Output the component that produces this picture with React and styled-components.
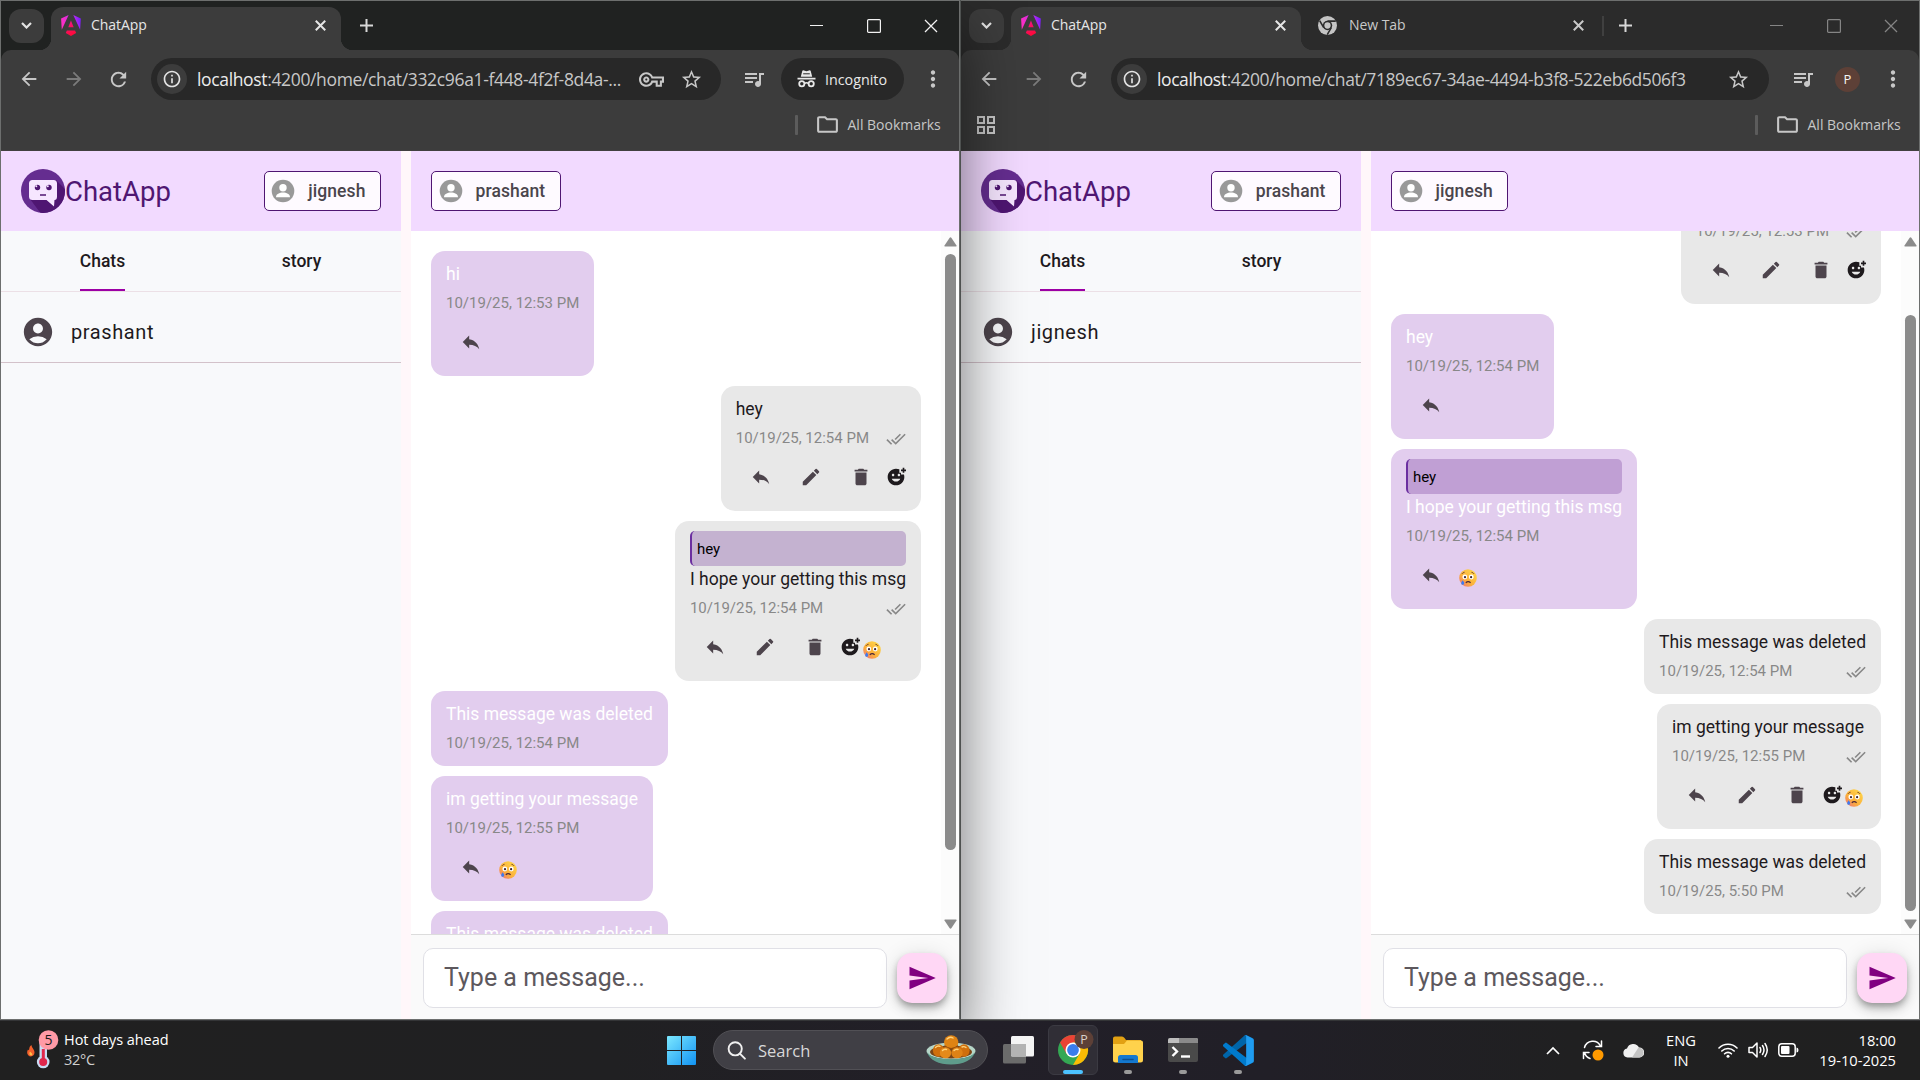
import React from "react";
import styled, { createGlobalStyle, css } from "styled-components";
import {
  MdReply, MdEdit, MdDelete, MdAddReaction, MdDoneAll, MdSend, MdAccountCircle,
  MdArrowBack, MdArrowForward, MdRefresh, MdInfoOutline, MdStarBorder, MdQueueMusic,
  MdMoreVert, MdOutlineFolder, MdOutlineVpnKey,
} from "react-icons/md";

const UI = `"Open Sans", "Noto Sans", sans-serif`;
const RB = `Roboto, "Noto Sans", sans-serif`;

const Global = createGlobalStyle`
  * { box-sizing: border-box; }
  body { margin: 0; background: #1f2022; overflow: hidden; }
  svg { display: block; flex: none; }
`;

const Desktop = styled.div`
  width: 1920px;
  height: 1080px;
  display: flex;
  flex-direction: column;
  overflow: hidden;
`;

const Windows = styled.div`
  display: flex;
  height: 1020px;
  overflow: hidden;
`;

const Frame = styled.section`
  width: 960px;
  height: 1020px;
  border: 1px solid #6d6f6e;
  display: flex;
  flex-direction: column;
  position: relative;
  z-index: ${(p) => (p.$active ? 1 : 0)};
  box-shadow: ${(p) => (p.$active ? "1px 0 0 #4e5150, 0 30px 60px 0 rgba(0,0,0,.56)" : "none")};
`;

/* ---------- browser chrome ---------- */

const TitleBar = styled.header`
  height: 49px;
  flex: none;
  display: flex;
  align-items: center;
  padding-left: 8px;
  background: ${(p) => (p.$active ? "#202221" : "#2b2b2b")};
  color: #e3e3e3;
  font-family: ${UI};
`;

const TabSearch = styled.button`
  width: 35px;
  height: 34px;
  margin-right: 7px;
  border: 0;
  border-radius: 12px;
  background: #3c3c3c;
  color: #e3e3e3;
  display: grid;
  place-items: center;
  padding: 0;
`;

const Tab = styled.div`
  position: relative;
  width: ${(p) => p.$w || 290}px;
  height: 43px;
  margin-top: 6px;
  padding: 0 12px 7px ${(p) => (p.$on ? 10 : 17)}px;
  display: flex;
  align-items: center;
  font-size: 14px;
  letter-spacing: -0.05px;
  color: ${(p) => (p.$on ? "#e6e6e6" : "#c9c9c9")};
  ${(p) =>
    p.$on &&
    css`
      background: #3c3c3c;
      border-radius: 12px 12px 0 0;
      &::before,
      &::after {
        content: "";
        position: absolute;
        bottom: 0;
        width: 12px;
        height: 12px;
      }
      &::before {
        left: -12px;
        background: radial-gradient(circle at 0 0, transparent 12px, #3c3c3c 12.5px);
      }
      &::after {
        right: -12px;
        background: radial-gradient(circle at 12px 0, transparent 12px, #3c3c3c 12.5px);
      }
    `}
`;

const TabTitle = styled.span`
  flex: 1;
  margin-left: ${(p) => p.$gap || 10}px;
  line-height: 20px;
`;

const TabClose = styled.span`
  margin-right: ${(p) => p.$gap}px;
`;

const TabDivider = styled.i`
  width: 2px;
  height: 20px;
  background: #404040;
`;

const PlusSlot = styled.div`
  width: 42px;
  margin-left: ${(p) => p.$gap}px;
  display: grid;
  place-items: center;
  color: #d8d8d8;
`;

const Controls = styled.div`
  margin-left: auto;
  margin-right: -1px;
  display: flex;
  color: ${(p) => (p.$active ? "#f2f2f2" : "#858585")};
`;

const Control = styled.div`
  width: 57.5px;
  display: grid;
  place-items: center;
`;

const ToolBarBack = styled.div`
  flex: none;
  background: ${(p) => (p.$active ? "#202221" : "#2b2b2b")};
`;

const ToolBar = styled.div`
  height: 58px;
  padding-left: 5px;
  display: flex;
  align-items: center;
  background: #3c3c3c;
  border-radius: 10px 10px 0 0;
  color: #c7c7c7;
  font-family: ${UI};
`;

const Slot = styled.div`
  width: ${(p) => p.$w || 45}px;
  height: 45px;
  flex: none;
  display: grid;
  place-items: center;
  color: ${(p) => (p.$dim ? "#7b7b7b" : "#c7c7c7")};
`;

const MenuSlot = styled(Slot)`
  width: 55px;
  padding-left: 2px;
`;

const Omnibox = styled.div`
  flex: 1;
  height: 42px;
  margin: 0 ${(p) => p.$gap}px 0 10px;
  padding: 0 10px 0 6px;
  border-radius: 21px;
  background: #282828;
  display: flex;
  align-items: center;
`;

const SiteInfo = styled.span`
  width: 30px;
  height: 30px;
  border-radius: 50%;
  background: #3c3c3c;
  color: #e3e3e3;
  display: grid;
  place-items: center;
`;

const Url = styled.span`
  flex: 1;
  margin-left: 10px;
  font-size: 17.5px;
  line-height: 24px;
  letter-spacing: ${(p) => p.$ls}px;
  white-space: nowrap;
  color: #c7c7c7;
  b {
    font-weight: 400;
    color: #ececec;
  }
`;

const IncognitoChip = styled.div`
  width: 123px;
  height: 42px;
  margin-left: 4.5px;
  padding-left: 16px;
  border-radius: 21px;
  background: #282828;
  color: #e8e8e8;
  display: flex;
  align-items: center;
  gap: 9px;
  font-size: 14.3px;
`;

const ProfileDot = styled.span`
  width: 25px;
  height: 25px;
  margin: 0 4px 0 10px;
  border-radius: 50%;
  background: #5d4037;
  color: #f5f5f5;
  font: 13px/25px ${UI};
  text-align: center;
`;

const BookmarkBar = styled.div`
  height: 43px;
  flex: none;
  padding: 0 16.500px 9px 16px;
  display: flex;
  align-items: center;
  background: #3c3c3c;
  color: #c7c7c7;
  font-family: ${UI};
  font-size: 14px;
  border-bottom: 1px solid #424040;
`;

const BookmarkDivider = styled.i`
  width: 3px;
  height: 20px;
  margin-left: auto;
  border-radius: 1px;
  background: #5c5c5c;
`;

const AllBookmarks = styled.span`
  width: 145px;
  padding-left: 17px;
  display: flex;
  align-items: center;
  gap: 8px;
  white-space: nowrap;
`;

/* ---------- chat page ---------- */

const Page = styled.main`
  flex: 1;
  min-height: 0;
  display: grid;
  grid-template-columns: 400px 1fr;
  column-gap: 10px;
  background: #fff7fa;
  font-family: ${RB};
`;

const Side = styled.aside`
  background: #f8f9fb;
  display: flex;
  flex-direction: column;
`;

const Head = styled.div`
  height: 80px;
  flex: none;
  padding: 0 20px;
  display: flex;
  align-items: center;
  justify-content: space-between;
  background: #f2daff;
`;

const Brand = styled.div`
  display: flex;
  align-items: center;
  font-size: 27.5px;
  color: #4f1672;
`;

const UserChip = styled.button`
  height: 40px;
  padding: 0 14.5px 0 6.5px;
  display: flex;
  align-items: center;
  gap: 13px;
  border: 1px solid #4f1672;
  border-radius: 5px;
  background: #fefaff;
  color: #4a454c;
  font: 500 17.5px ${RB};
  letter-spacing: 0.1px;
`;

const SideTabs = styled.nav`
  height: 61px;
  flex: none;
  padding-left: 2px;
  display: grid;
  grid-template-columns: 1fr 1fr;
  justify-items: center;
  border-bottom: 1px solid #ece0e6;
`;

const SideTab = styled.span`
  height: 60px;
  font-weight: 500;
  font-size: 17.5px;
  line-height: 60px;
  color: #1e1a1d;
  box-shadow: inset 0 -2px 0 ${(p) => (p.$on ? "#9c00a5" : "transparent")};
`;

const Contact = styled.div`
  height: 71px;
  padding: 9px 0 0 20px;
  display: flex;
  align-items: center;
  gap: 16px;
  border-bottom: 1px solid #d3c2ca;
  color: #1e1a1d;
  font-size: 20px;
  letter-spacing: 0.6px;
`;

const Conversation = styled.section`
  display: flex;
  flex-direction: column;
  min-width: 0;
  min-height: 0;
  background: #fff;
`;

const Scroller = styled.div`
  flex: 1;
  min-height: 0;
  display: flex;
`;

const Messages = styled.div`
  flex: 1;
  padding: 20px;
  display: flex;
  flex-direction: column;
  justify-content: ${(p) => (p.$bottom ? "flex-end" : "flex-start")};
  gap: 10px;
  overflow: hidden;
`;

const Bubble = styled.article`
  flex: none;
  align-self: ${(p) => (p.$own ? "flex-end" : "flex-start")};
  padding: 10px 15px 8px;
  border-radius: 14px;
  background: ${(p) => (p.$own ? "#e8e8e8" : "#e2cdee")};
  color: ${(p) => (p.$own ? "#1e1a1d" : "#fff")};
`;

const Quote = styled.div`
  height: 35px;
  padding-left: 5px;
  border-left: 2px solid #6b2fa0;
  border-radius: 5px;
  background: rgba(112, 52, 152, 0.3);
  color: #000;
  font-size: 15px;
  line-height: 36px;
`;

const Body = styled.p`
  margin: 0 0 2px;
  font-size: 17.5px;
  line-height: 26px;
  height: 25px;
  white-space: nowrap;
`;

const Meta = styled.div`
  height: 30px;
  display: flex;
  align-items: center;
  justify-content: space-between;
  gap: 17px;
  font-size: 15px;
  color: #888;
`;

const Receipt = styled(MdDoneAll)`
  margin-top: 1px;
`;

const Actions = styled.div`
  height: 50px;
  padding-bottom: 2px;
  display: flex;
  align-items: center;
  color: #4d444c;
`;

const Action = styled.span`
  width: 50px;
  display: grid;
  place-items: center;
`;

const AddReaction = styled.span`
  width: 20px;
  color: #1e1a1d;
`;

const Reaction = styled.span`
  width: 24px;
  padding-top: 6px;
  display: grid;
  place-items: center;
`;

const ScrollBar = styled.div`
  width: 18px;
  flex: none;
  padding: 6px 0 5px 1px;
  display: flex;
  flex-direction: column;
  align-items: center;
  background: #fcfcfc;
`;

const Thumb = styled.i`
  width: 11px;
  height: 596px;
  margin-top: ${(p) => p.$top}px;
  margin-bottom: auto;
  border-radius: 6px;
  background: #8b8b8b;
`;

const Composer = styled.footer`
  height: 85px;
  flex: none;
  padding: 0 12px 0 12px;
  display: flex;
  align-items: center;
  gap: 10px;
  border-top: 1px solid #dcdcdc;
  background: #fafafa;
`;

const Field = styled.div`
  flex: 1;
  height: 60px;
  margin-top: 2px;
  padding-left: 20px;
  border: 1px solid #e0e0e6;
  border-radius: 10px;
  background: #fff;
  color: #5d585d;
  font-size: 25px;
  line-height: 58px;
`;

const SendButton = styled.button`
  width: 50px;
  height: 50px;
  margin-top: 2px;
  padding: 0;
  border: 0;
  border-radius: 15px;
  background: #ffd7f5;
  color: #800080;
  display: grid;
  place-items: center;
  box-shadow: 0 4px 6px -1px rgba(0, 0, 0, 0.28), 0 7px 12px rgba(0, 0, 0, 0.14), 0 1px 20px rgba(0, 0, 0, 0.1);
`;

/* ---------- taskbar ---------- */

const TaskBar = styled.footer`
  height: 60px;
  padding-bottom: 1px;
  display: flex;
  align-items: center;
  background: linear-gradient(90deg, #202020 0, #202022 32%, #221f28 50%, #211f27 66%, #202021 82%, #202020 100%);
  border-top: 1px solid #343537;
  color: #fff;
  font-family: ${UI};
  font-size: 14px;
`;

const Weather = styled.div`
  width: 667px;
  padding-left: 25px;
  display: flex;
  align-items: center;
  line-height: 20px;
  font-size: 14.5px;
  letter-spacing: -0.05px;
  span {
    display: block;
  }
  span + span {
    color: #d0d0d0;
    letter-spacing: -0.3px;
  }
`;

const WeatherText = styled.div`
  margin: -1px 0 0 3px;
`;

const SearchBox = styled.div`
  width: 275px;
  height: 40px;
  margin-left: 17px;
  padding: 0 11px 0 13px;
  border-radius: 20px;
  border: 1px solid #515055;
  background: #403f45;
  display: flex;
  align-items: center;
  gap: 12px;
  font-size: 16.5px;
  color: #d8d8d8;
  span {
    flex: 1;
  }
`;

const Apps = styled.div`
  display: flex;
  margin-left: 5px;
`;

const AppButton = styled.div`
  position: relative;
  width: 50px;
  height: 50px;
  margin-right: 5px;
  display: grid;
  place-items: center;
  border-radius: 6px;
  background: ${(p) => (p.$active ? "#302e36" : "transparent")};
  border: 1px solid ${(p) => (p.$active ? "#3b3a42" : "transparent")};
`;

const Running = styled.i`
  position: absolute;
  bottom: 0;
  left: 50%;
  transform: translateX(-50%);
  width: ${(p) => (p.$active ? 20 : 8)}px;
  height: 4px;
  border-radius: 2px;
  background: ${(p) => (p.$active ? "#4cc2ff" : "#9a9a9a")};
`;

const Tray = styled.div`
  margin-left: auto;
  padding-right: 24px;
  display: flex;
  align-items: center;
`;

const TrayCell = styled.div`
  width: ${(p) => p.$w}px;
  display: grid;
  place-items: center;
`;

const TrayText = styled.div`
  width: ${(p) => p.$w}px;
  margin-top: -1px;
  text-align: ${(p) => p.$align};
  font-size: 14.7px;
  line-height: 20px;
  white-space: nowrap;
`;

/* ---------- drawings ---------- */

const AngularMark = () => (
  <svg width="20" height="21" viewBox="0 0 223 236">
    <defs>
      <linearGradient id="ngA" x1="0" y1="0.3" x2="1" y2="0.1">
        <stop offset="0" stopColor="#ff2fc4" />
        <stop offset="0.6" stopColor="#c62bf0" />
        <stop offset="1" stopColor="#6a1bff" />
      </linearGradient>
      <linearGradient id="ngB" x1="0" y1="0" x2="0.3" y2="1">
        <stop offset="0" stopColor="#f0158f" />
        <stop offset="1" stopColor="#ff0a3c" />
      </linearGradient>
    </defs>
    <path fill="url(#ngA)" d="m222.077 39.192-8.019 125.923L137.387 0l84.69 39.192ZM7.937 165.115 0 39.192 84.69 0 7.937 165.115Z" />
    <path fill="url(#ngB)" d="m168.972 202.017-57.933 33.056-57.934-33.056 11.783-28.556h92.301l11.783 28.556ZM111.039 62.675l30.357 73.803H80.681l30.358-73.803Z" />
  </svg>
);

const Cross = ({ size = 10, w = 2 }) => (
  <svg width={size} height={size} viewBox="0 0 10 10" fill="none" stroke="currentColor" strokeWidth={w}>
    <path d="M.7.7l8.6 8.6M9.3.7L.7 9.3" />
  </svg>
);

const Plus = () => (
  <svg width="13" height="13" viewBox="0 0 13 13" stroke="currentColor" strokeWidth="2">
    <path d="M6.5 0v13M0 6.5h13" />
  </svg>
);

const GrayChrome = () => (
  <svg width="19" height="19" viewBox="0 0 20 20" color="#c4c4c4">
    <circle cx="10" cy="10" r="10" fill="currentColor" />
    <circle cx="10" cy="10" r="5" fill="#2b2b2b" />
    <circle cx="10" cy="10" r="3.3" fill="currentColor" />
    <path d="M10 5.4h8.7M6 12.3L1.8 5M14 12.3L9.7 19.7" stroke="#2b2b2b" strokeWidth="1.6" />
  </svg>
);

const Incognito = () => (
  <svg width="19" height="18" viewBox="0 0 19 18">
    <path fill="currentColor" d="M5.200 1.300Q5.600 0 7 .5L9.500 1.200 12 .5q1.400-.5 1.800.8L15.200 6.800H3.800zM.5 7.800h18v1.700H.5z" />
    <path d="M6.200 3.800h6.600" stroke="#282828" strokeWidth="1" />
    <circle cx="4.800" cy="13.800" r="2.600" fill="none" stroke="currentColor" strokeWidth="1.800" />
    <circle cx="14.200" cy="13.800" r="2.600" fill="none" stroke="currentColor" strokeWidth="1.800" />
    <path d="M7.400 13.500q2.100-1.500 4.200 0" fill="none" stroke="currentColor" strokeWidth="1.600" />
  </svg>
);

const AppsGrid = () => (
  <svg width="18" height="18" viewBox="0 0 18 18" fill="none" stroke="#c7c7c7" strokeWidth="2">
    <path d="M1 1h6v6H1zM11 1h6v6h-6zM1 11h6v6H1zM11 11h6v6h-6z" />
  </svg>
);

const BrandMark = ({ id }) => (
  <svg width="44" height="44" viewBox="0 0 44 44">
    <clipPath id={id}><circle cx="22" cy="22" r="22" /></clipPath>
    <g clipPath={`url(#${id})`}>
      <rect width="44" height="44" fill="#652d90" />
      <path d="M35 11L50 26V50H24L9 30 30 28z" fill="#4f1672" />
      <path d="M11.500 11h21Q36 11 36 14.500v13Q36 31 33.500 31L33 37.500 25.500 31h-14Q8 31 8 27.500v-13Q8 11 11.500 11z" fill="#f6e6ff" />
      <circle cx="16.500" cy="18.500" r="2.700" fill="#4f1672" />
      <circle cx="28" cy="18.500" r="2.700" fill="#4f1672" />
      <circle cx="15.300" cy="17.300" r="1" fill="#f6e6ff" />
      <circle cx="26.800" cy="17.300" r="1" fill="#f6e6ff" />
      <path d="M19 26h6" stroke="#4f1672" strokeWidth="1.500" />
    </g>
  </svg>
);

const UserMark = () => (
  <svg width="24" height="24" viewBox="0 0 24 24">
    <circle cx="12" cy="12" r="11.300" fill="#999" />
    <circle cx="12" cy="8.700" r="3.700" fill="#fff" />
    <path d="M5 18.200c0-3 3.500-4.600 7-4.600s7 1.600 7 4.600z" fill="#fff" />
  </svg>
);

const Worried = () => (
  <svg width="18" height="18" viewBox="0 0 18 18">
    <defs>
      <linearGradient id="face" x1="1" y1="0" x2="0.1" y2="1">
        <stop offset="0" stopColor="#ffdd4a" />
        <stop offset="0.65" stopColor="#fbae3c" />
        <stop offset="1" stopColor="#f0707c" />
      </linearGradient>
    </defs>
    <circle cx="9" cy="9" r="8.800" fill="url(#face)" />
    <circle cx="5.800" cy="8" r="2.400" fill="#fff" />
    <circle cx="12.300" cy="8" r="2.400" fill="#fff" />
    <circle cx="6" cy="8.200" r="1.100" fill="#3b2430" />
    <circle cx="12.100" cy="8.200" r="1.100" fill="#3b2430" />
    <path d="M2.800 5q1-1.600 2.800-1.700M12.400 3.300q1.800.1 2.800 1.700" fill="none" stroke="#7a4a2a" strokeWidth=".9" />
    <path d="M6.800 13.800q2.400-2.200 4.800 0" fill="none" stroke="#4a2638" strokeWidth="1.200" />
    <path d="M3.700 11.300c1 1.400 1.500 2.100 1.500 3a1.500 1.500 0 0 1-3 0c0-.9.5-1.600 1.500-3z" fill="#3f7bf0" />
  </svg>
);

const Triangle = ({ down }) => (
  <svg width="13" height="10" viewBox="0 0 13 10">
    <path fill="#8b8b8b" d={down ? "M1 .5h11q1 0 .5 1L7.500 9q-1 1.300-2 0L.5 1.500Q0 .5 1 .5z" : "M1 9.500h11q1 0 .5-1L7.500 1q-1-1.300-2 0L.5 8.500Q0 9.500 1 9.500z"} />
  </svg>
);

const Thermo = () => (
  <svg width="36" height="40" viewBox="0 0 36 40">
    <path d="M5 26.500c-3-1.500-3.500-4.500-2-7 .6 1 1 .8 1.200-.3.200-2 1-3.500 2.300-4.200 0 2.500 3 4.300 3 7.500 0 2.500-2 4-4.500 4z" fill="#f4602c" />
    <path d="M6 25.500c-1.800-.5-2-2.500-1-4 .8 1 2.500 2 2.300 3.200-.2.600-.7.900-1.300.8z" fill="#ffc04a" />
    <rect x="14.500" y="8" width="7.500" height="25" rx="3.700" fill="#c9dcf5" />
    <circle cx="18.200" cy="32" r="6.300" fill="#c9dcf5" />
    <rect x="16.800" y="19" width="3" height="12" fill="#e0264c" />
    <circle cx="18.200" cy="32" r="4" fill="#e0264c" />
    <circle cx="23.500" cy="10" r="9.800" fill="#ff9aa6" />
    <text x="23.500" y="15" textAnchor="middle" fontFamily="Open Sans" fontSize="14" fill="#1b1b1b">5</text>
  </svg>
);

const WinLogo = () => (
  <svg width="29" height="29" viewBox="0 0 29 29">
    <defs>
      <linearGradient id="win" x1="0" y1="0" x2="1" y2="1">
        <stop offset="0" stopColor="#7ce8ff" />
        <stop offset="1" stopColor="#1192f2" />
      </linearGradient>
    </defs>
    <path fill="url(#win)" d="M0 1q0-1 1-1h13v14H0zM15 0h13q1 0 1 1v13H15zM0 15h14v14H1q-1 0-1-1zM15 15h14v13q0 1-1 1H15z" />
  </svg>
);

const Magnifier = () => (
  <svg width="19" height="19" viewBox="0 0 19 19" fill="none" stroke="#f0f0f0" strokeWidth="1.900" strokeLinecap="round">
    <circle cx="8.200" cy="7.800" r="6.600" />
    <path d="M12.900 12.700l5 5" />
  </svg>
);

const Bowl = () => (
  <svg width="50" height="30" viewBox="0 0 50 30">
    <ellipse cx="25" cy="16" rx="24.500" ry="8.500" fill="#b6d6c8" />
    <path d="M1 17c2 8 12 12.500 24 12.500S47 25 49 17c-4 6-13 7-24 7S5 23 1 17z" fill="#5f9c8b" />
    <ellipse cx="25" cy="17" rx="21" ry="6.500" fill="#7b4516" />
    <ellipse cx="12.500" cy="15.500" rx="5.600" ry="6.200" fill="#cf6f0c" />
    <ellipse cx="38" cy="15.500" rx="5.600" ry="6.200" fill="#cf6f0c" />
    <ellipse cx="25.200" cy="7" rx="7.200" ry="6.800" fill="#de8313" />
    <path d="M18.500 10q6.500 6 13.500 0v4H18.500z" fill="#8f4a0c" />
    <ellipse cx="19.500" cy="17.800" rx="5.700" ry="5.500" fill="#e58a1a" />
    <ellipse cx="31" cy="17.800" rx="5.700" ry="5.500" fill="#df8215" />
    <path d="M21 4q3-3 6-1M9.500 12.500q2-2 4.500-1.200M16.500 15.500q2-2 4-1M28 15.500q2-2 4-1M36 12q2-1 4 .5" stroke="#ffd27a" strokeWidth="1.400" fill="none" strokeLinecap="round" />
  </svg>
);

const TaskView = () => (
  <svg width="31" height="28" viewBox="0 0 31 28">
    <rect x="0" y="8" width="23" height="19.500" rx="1.500" fill="#6b6b6b" />
    <rect x="8" y="0" width="23" height="20.500" rx="1.500" fill="#f4f4f4" />
    <path d="M8 8h15v12.500H9.500Q8 20.500 8 19z" fill="#b3b3b3" />
  </svg>
);

const ChromeApp = () => (
  <svg width="42" height="42" viewBox="0 0 42 42">
    <circle cx="21" cy="21" r="15" fill="#34a853" />
    <path d="M8 13.500A15 15 0 0 1 34 13.500L21 13.500 21 21z" fill="#ea4335" />
    <path d="M34 13.500A15 15 0 0 1 21 36L27.500 24.800 21 13.500z" fill="#fbbc04" />
    <path d="M8 13.500L14.500 24.800 21 21 21 13.500z" fill="#ea4335" />
    <circle cx="21" cy="21" r="7.500" fill="#fff" />
    <circle cx="21" cy="21" r="5.900" fill="#3b7ded" />
    <circle cx="32" cy="10.500" r="9.500" fill="#5d4037" />
    <text x="32" y="15" textAnchor="middle" fontFamily="Open Sans" fontSize="12.500" fill="#d8cfcb">P</text>
  </svg>
);

const Folder = () => (
  <svg width="30" height="28" viewBox="0 0 30 28">
    <path d="M0 2.500Q0 .5 2 .5h7q1.500 0 2.500 1.500L13 4h15v6H0z" fill="#e2a113" />
    <path d="M0 8h11l3-3.500h14q2 0 2 2V24q0 2.500-2.500 2.500h-25Q0 26.500 0 24z" fill="#ffd24c" />
    <path d="M5 27v-5.500Q5 19 7.500 19h15q2.500 0 2.500 2.500V27z" fill="#1478cf" />
    <path d="M10 23.500h10" stroke="#0c4f91" strokeWidth="1.500" strokeLinecap="round" />
  </svg>
);

const TerminalApp = () => (
  <svg width="30" height="24" viewBox="0 0 30 24">
    <rect width="30" height="24" rx="2" fill="#4a4a4a" />
    <path d="M0 5V2q0-2 2-2h26q2 0 2 2v3z" fill="#bdbdbd" />
    <path d="M11 0h9v5h-9zM20 0h8q2 0 2 2v3H20z" fill="#8a8a8a" />
    <path d="M4.500 9l4.500 4.500-4.500 4.500" fill="none" stroke="#fff" strokeWidth="2.400" />
    <path d="M13 18.500h9" stroke="#fff" strokeWidth="2.400" />
  </svg>
);

const CodeApp = () => (
  <svg width="31" height="31" viewBox="0 0 100 100">
    <path fill="#0065a9" d="M96 10.500L75.500 1a6.200 6.200 0 0 0-7 1.200L1.300 63.200a4.200 4.200 0 0 0 0 6.100l5.500 5a4.200 4.200 0 0 0 5.300.2L93.300 12.900c2.700-2 6.600 0 6.600 3.300v-.2c0-2.400-1.400-4.500-3.500-5.500z" />
    <path fill="#007acc" d="M96 89.500L75.500 99a6.200 6.200 0 0 1-7-1.200L1.300 36.800a4.200 4.200 0 0 1 0-6.100l5.500-5a4.200 4.200 0 0 1 5.300-.2l81.200 61.600c2.700 2 6.600 0 6.600-3.300v.2c0 2.400-1.400 4.500-3.500 5.500z" />
    <path fill="#1f9cf0" d="M75.500 99a6.200 6.200 0 0 1-7-1.200c2.300 2.300 6.200.7 6.200-2.600V4.800c0-3.300-3.900-4.900-6.200-2.600a6.200 6.200 0 0 1 7-1.200l20.600 9.900a6.200 6.200 0 0 1 3.500 5.600v67a6.200 6.200 0 0 1-3.500 5.600z" />
  </svg>
);

const Sync = () => (
  <svg width="22" height="22" viewBox="0 0 22 22" fill="none" stroke="#fff" strokeWidth="1.500" strokeLinecap="round">
    <path d="M2.500 8.500a8.600 8.600 0 0 1 16-1.500M19.500 2v5.500H14M2.500 13.500a8.600 8.600 0 0 0 5.500 6M1.500 19.500v-6H7" />
    <circle cx="16" cy="16" r="5.500" fill="#ff9a00" stroke="none" />
  </svg>
);

const Cloud = () => (
  <svg width="21" height="16" viewBox="0 0 21 16">
    <path d="M4.500 15.500A4.500 4.500 0 0 1 4 6.600 6.500 6.500 0 0 1 16 5.500a5 5 0 0 1 .5 10z" fill="#f0f0f0" />
    <path d="M9 15.500L15.500 5.400q5 .6 5 5.100 0 4.500-4.500 5z" fill="#c4c4c4" />
  </svg>
);

const Wifi = () => (
  <svg width="20" height="16" viewBox="0 0 20 16" fill="none" stroke="#fff" strokeWidth="1.600" strokeLinecap="round">
    <path d="M1 6a12.800 12.800 0 0 1 18 0M3.800 9a8.800 8.800 0 0 1 12.400 0M6.600 11.800a4.800 4.800 0 0 1 6.800 0" />
    <circle cx="10" cy="14.200" r="1.500" fill="#fff" stroke="none" />
  </svg>
);

const Speaker = () => (
  <svg width="21" height="18" viewBox="0 0 21 18" fill="none" stroke="#fff" strokeWidth="1.500" strokeLinecap="round" strokeLinejoin="round">
    <path d="M1 6.500h3.500L9 2v14l-4.500-4.500H1zM12 6.500q1.500 2.500 0 5M14.500 4.500q3 4.500 0 9M17 2.500q4.500 6.500 0 13" />
  </svg>
);

const Battery = () => (
  <svg width="21" height="14" viewBox="0 0 21 14">
    <rect x=".8" y=".8" width="16.400" height="12.400" rx="3" fill="none" stroke="#fff" strokeWidth="1.500" />
    <rect x="3" y="3" width="8.500" height="8" rx="1" fill="#fff" />
    <path d="M18.500 4.500q2 0 2 2.500t-2 2.500z" fill="#fff" />
  </svg>
);

/* ---------- composed parts ---------- */

function Message({ m }) {
  return (
    <Bubble $own={m.own}>
      {m.quote && <Quote>{m.quote}</Quote>}
      <Body>{m.text}</Body>
      <Meta>
        <span>{m.time}</span>
        {m.own && <Receipt size={20} />}
      </Meta>
      {!m.deleted && (
        <Actions>
          <Action><MdReply size={22} /></Action>
          {m.own && <Action><MdEdit size={22} /></Action>}
          {m.own && <Action><MdDelete size={22} /></Action>}
          {m.own && <AddReaction><MdAddReaction size={20} /></AddReaction>}
          {m.reaction && <Reaction><Worried /></Reaction>}
        </Actions>
      )}
    </Bubble>
  );
}

function ChatPage({ id, me, peer, messages, bottom, thumbTop }) {
  return (
    <Page>
      <Side>
        <Head>
          <Brand><BrandMark id={id} />ChatApp</Brand>
          <UserChip><UserMark />{me}</UserChip>
        </Head>
        <SideTabs>
          <SideTab $on>Chats</SideTab>
          <SideTab>story</SideTab>
        </SideTabs>
        <Contact><MdAccountCircle size={34} color="#4d444c" />{peer}</Contact>
      </Side>
      <Conversation>
        <Head><UserChip><UserMark />{peer}</UserChip></Head>
        <Scroller>
          <Messages $bottom={bottom}>
            {messages.map((m, i) => <Message key={i} m={m} />)}
          </Messages>
          <ScrollBar>
            <Triangle />
            <Thumb $top={thumbTop} />
            <Triangle down />
          </ScrollBar>
        </Scroller>
        <Composer>
          <Field>Type a message...</Field>
          <SendButton><MdSend size={30} /></SendButton>
        </Composer>
      </Conversation>
    </Page>
  );
}

function Browser({ active, path, ls, incognito, children }) {
  return (
    <Frame $active={active}>
      <TitleBar $active={active}>
        <TabSearch>
          <svg width="11" height="7" viewBox="0 0 11 7" fill="none" stroke="currentColor" strokeWidth="2.200"><path d="M1 1l4.500 4.500L10 1" /></svg>
        </TabSearch>
        <Tab $on>
          <AngularMark />
          <TabTitle>ChatApp</TabTitle>
          <TabClose $gap={3}><Cross size={11} w={1.8} /></TabClose>
        </Tab>
        {!incognito && (
          <>
            <Tab $w={301}>
              <GrayChrome />
              <TabTitle $gap={12}>New Tab</TabTitle>
              <TabClose $gap={6}><Cross size={11} w={1.8} /></TabClose>
            </Tab>
            <TabDivider />
          </>
        )}
        <PlusSlot $gap={incognito ? 4 : 0}><Plus /></PlusSlot>
        <Controls $active={active}>
          <Control><svg width="13" height="13" viewBox="0 0 13 13" stroke="currentColor"><path d="M0 6.500h13" /></svg></Control>
          <Control><svg width="14" height="14" viewBox="0 0 14 14" fill="none" stroke="currentColor" strokeWidth="1.200"><rect x=".6" y=".6" width="12.800" height="12.800" rx="1" /></svg></Control>
          <Control><Cross size={14} w={0.9} /></Control>
        </Controls>
      </TitleBar>
      <ToolBarBack $active={active}>
        <ToolBar>
          <Slot><MdArrowBack size={22} /></Slot>
          <Slot $dim><MdArrowForward size={22} /></Slot>
          <Slot><MdRefresh size={23} /></Slot>
          <Omnibox $gap={incognito ? 10.5 : 11.5}>
            <SiteInfo><MdInfoOutline size={20} /></SiteInfo>
            <Url $ls={ls}><b>localhost</b>:4200/home/chat/{path}</Url>
            {incognito && <Slot $w={40}><MdOutlineVpnKey size={25} /></Slot>}
            <Slot $w={40}><MdStarBorder size={23} /></Slot>
          </Omnibox>
          <Slot><MdQueueMusic size={24} /></Slot>
          {incognito ? <IncognitoChip><Incognito />Incognito</IncognitoChip> : <ProfileDot>P</ProfileDot>}
          <MenuSlot><MdMoreVert size={26} /></MenuSlot>
        </ToolBar>
      </ToolBarBack>
      <BookmarkBar>
        {!incognito && <AppsGrid />}
        <BookmarkDivider />
        <AllBookmarks><MdOutlineFolder size={25} />All Bookmarks</AllBookmarks>
      </BookmarkBar>
      {children}
    </Frame>
  );
}

const t54 = "10/19/25, 12:54 PM";
const conversation = [
  { from: "prashant", text: "hi", time: "10/19/25, 12:53 PM" },
  { from: "jignesh", text: "hey", time: t54 },
  { from: "jignesh", quote: "hey", text: "I hope your getting this msg", time: t54, reaction: true },
  { from: "prashant", text: "This message was deleted", time: t54, deleted: true },
  { from: "prashant", text: "im getting your message", time: "10/19/25, 12:55 PM", reaction: true },
  { from: "prashant", text: "This message was deleted", time: "10/19/25, 5:50 PM", deleted: true },
];
const viewOf = (user) => conversation.map((m) => ({ ...m, own: m.from === user }));

export default function App() {
  return (
    <Desktop>
      <Global />
      <Windows>
        <Browser active incognito path="332c96a1-f448-4f2f-8d4a-..." ls={-0.35}>
          <ChatPage id="brandL" me="jignesh" peer="prashant" messages={viewOf("jignesh")} thumbTop={7} />
        </Browser>
        <Browser path="7189ec67-34ae-4494-b3f8-522eb6d506f3" ls={-0.41}>
          <ChatPage id="brandR" me="prashant" peer="jignesh" messages={viewOf("prashant")} bottom thumbTop={68} />
        </Browser>
      </Windows>
      <TaskBar>
        <Weather>
          <Thermo />
          <WeatherText><span>Hot days ahead</span><span>32°C</span></WeatherText>
        </Weather>
        <WinLogo />
        <SearchBox><Magnifier /><span>Search</span><Bowl /></SearchBox>
        <Apps>
          <AppButton><TaskView /></AppButton>
          <AppButton $active><ChromeApp /><Running $active /></AppButton>
          <AppButton><Folder /><Running /></AppButton>
          <AppButton><TerminalApp /><Running /></AppButton>
          <AppButton><CodeApp /><Running /></AppButton>
        </Apps>
        <Tray>
          <TrayCell $w={40}>
            <svg width="14" height="9" viewBox="0 0 14 9" fill="none" stroke="#fff" strokeWidth="1.700"><path d="M1 8l6-6 6 6" /></svg>
          </TrayCell>
          <TrayCell $w={40}><Sync /></TrayCell>
          <TrayCell $w={40}><Cloud /></TrayCell>
          <TrayText $w={56} $align="center">ENG<br />IN</TrayText>
          <TrayCell $w={37}><Wifi /></TrayCell>
          <TrayCell $w={24}><Speaker /></TrayCell>
          <TrayCell $w={37}><Battery /></TrayCell>
          <TrayText $w={89} $align="right">18:00<br />19-10-2025</TrayText>
        </Tray>
      </TaskBar>
    </Desktop>
  );
}
